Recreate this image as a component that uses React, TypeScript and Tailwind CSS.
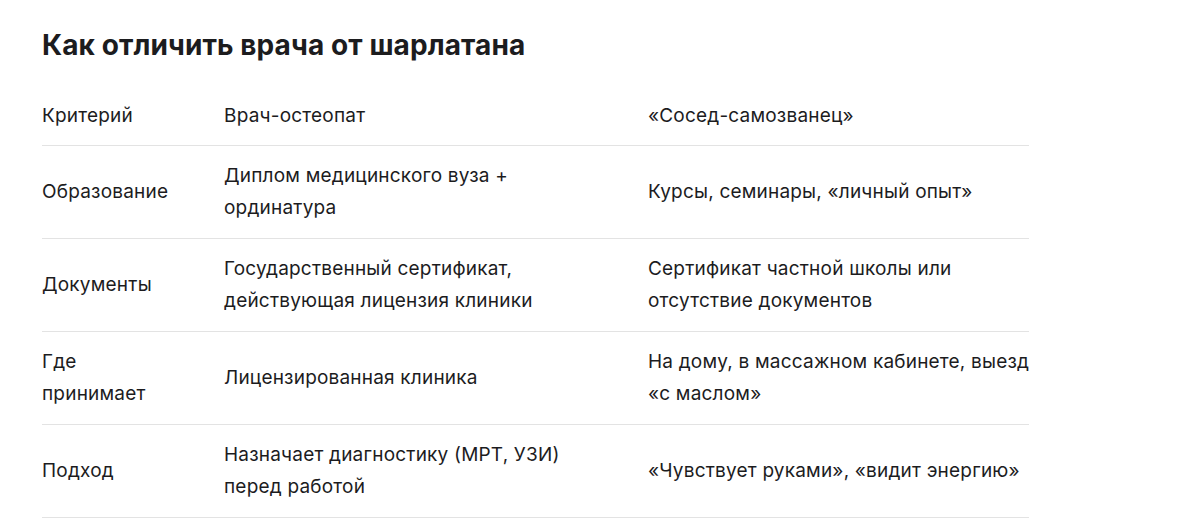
const rows: [string, string, string][] = [
  ["Образование", "Диплом медицинского вуза + ординатура", "Курсы, семинары, «личный опыт»"],
  ["Документы", "Государственный сертификат, действующая лицензия клиники", "Сертификат частной школы или отсутствие документов"],
  ["Где принимает", "Лицензированная клиника", "На дому, в массажном кабинете, выезд «с маслом»"],
  ["Подход", "Назначает диагностику (МРТ, УЗИ) перед работой", "«Чувствует руками», «видит энергию»"],
];

const Row = ({ cells, head }: { cells: [string, string, string]; head?: boolean }) => (
  <div className={`grid grid-cols-[182px_424px_387px] items-center border-b border-[#e3e3e3] ${head ? "py-[13px]" : "py-[14px]"}`}>
    <div className="pr-[46px]">{cells[0]}</div>
    <div className="pr-[66px]">{cells[1]}</div>
    <div className="pr-[4px]">{cells[2]}</div>
  </div>
);

export default function App() {
  return (
    <div className="w-[1200px] h-[528px] bg-white overflow-hidden text-[#1c1c1e] font-['Inter','Noto_Sans',sans-serif]">
      <div className="pl-[42px] pt-[28px]">
        <h2 className="text-[28px] leading-[34px] font-bold tracking-[0.1px]">Как отличить врача от шарлатана</h2>
        <div className="mt-[25px] w-[987px] text-[19px] leading-[32px] tracking-[0.2px]">
          <Row head cells={["Критерий", "Врач-остеопат", "«Сосед-самозванец»"]} />
          {rows.map((r) => (
            <Row key={r[0]} cells={r} />
          ))}
        </div>
      </div>
    </div>
  );
}
